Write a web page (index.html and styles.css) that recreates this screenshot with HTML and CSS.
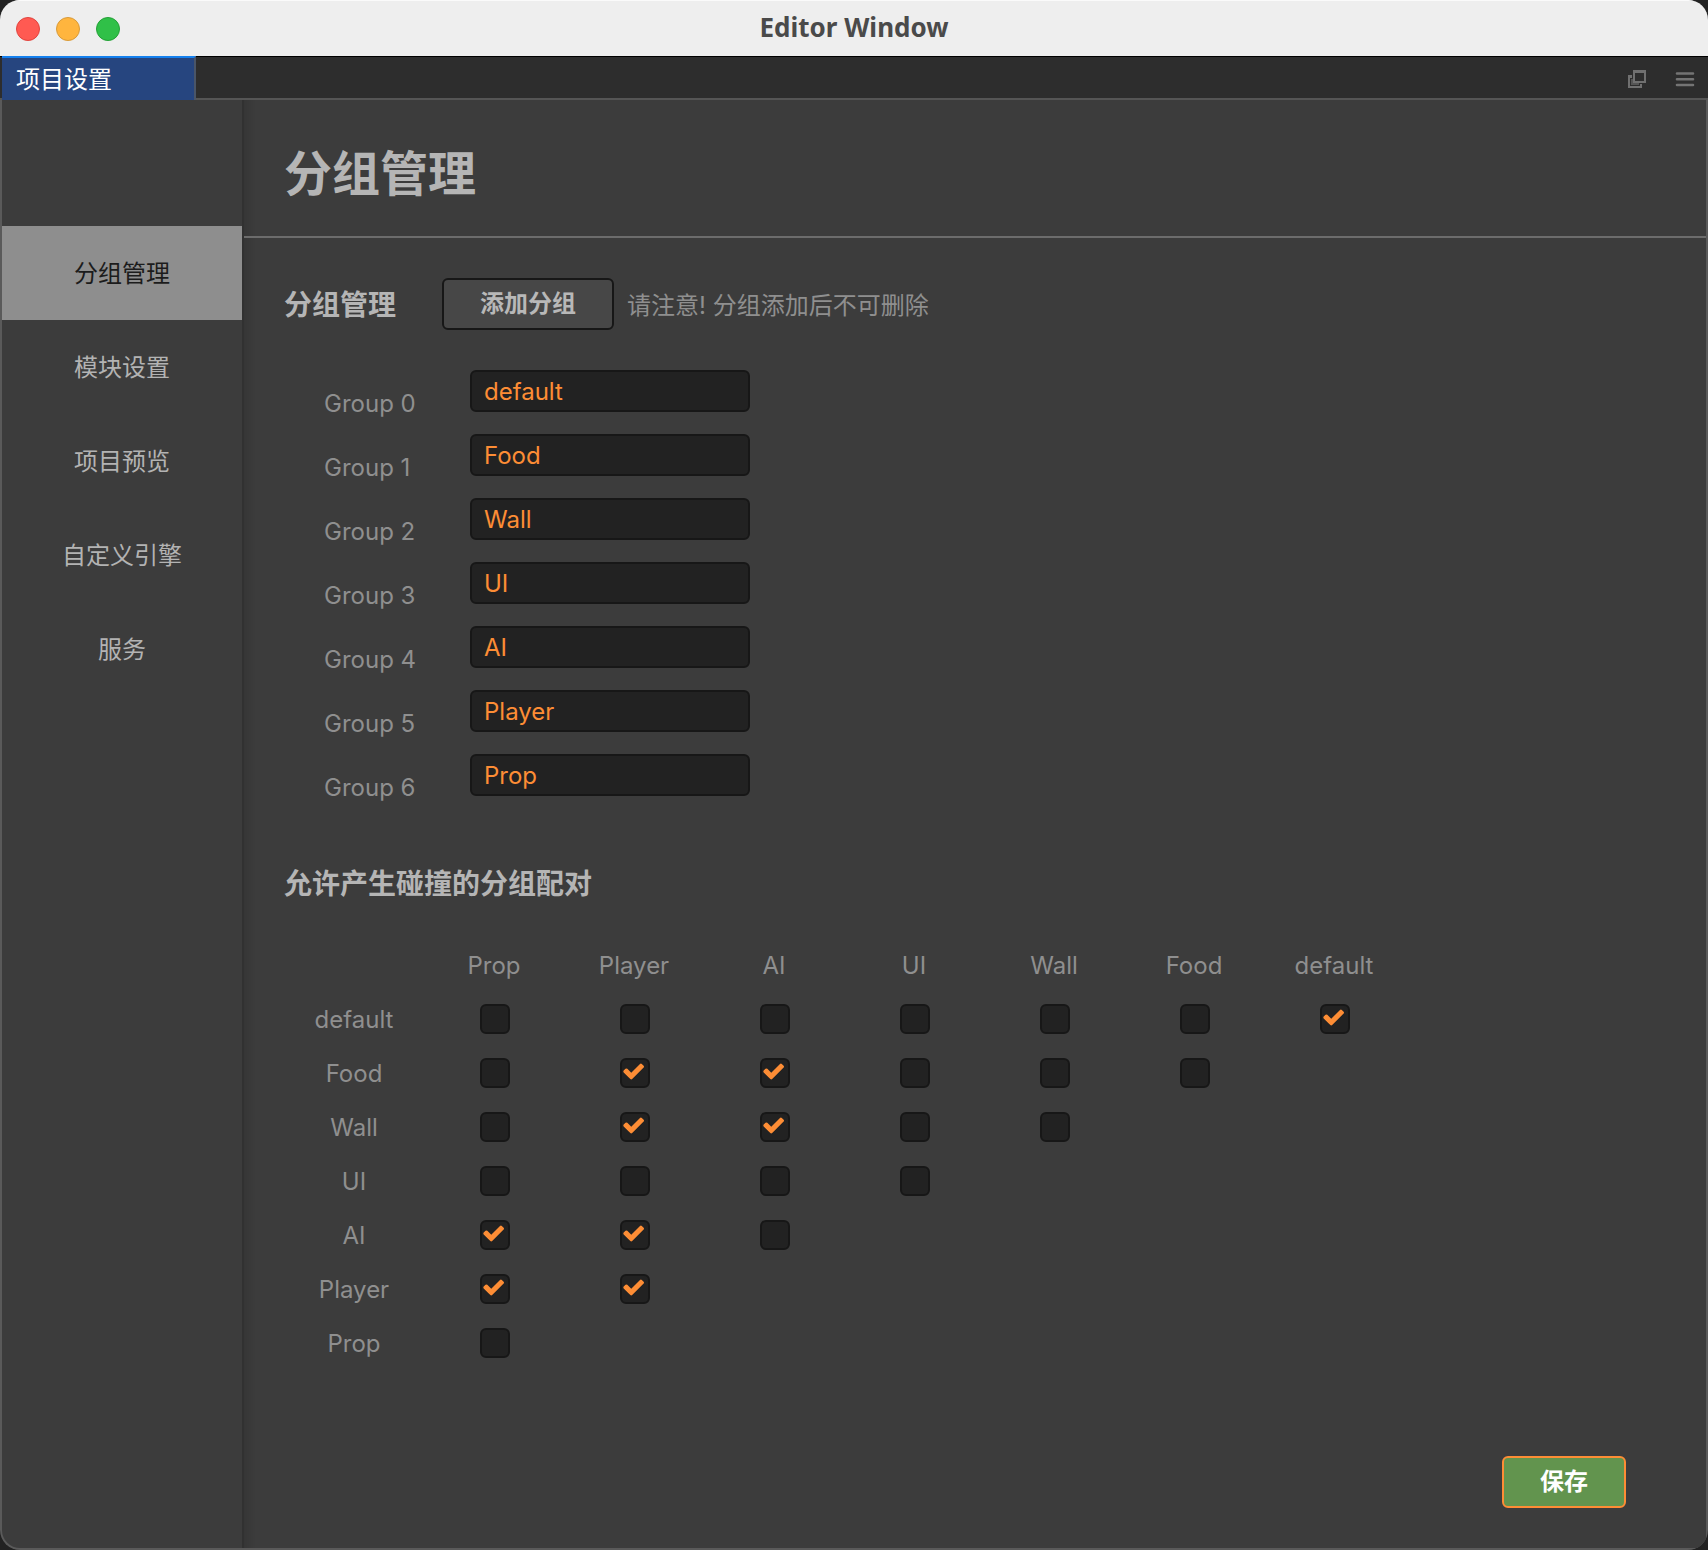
FILE: index.html
```html
<!DOCTYPE html>
<html lang="zh-CN">
<head>
<meta charset="utf-8">
<title>Editor Window</title>
<link rel="stylesheet" href="styles.css">
</head>
<body>
<div class="window">
  <header class="titlebar">
    <div class="lights"><span class="light close"></span><span class="light minimize"></span><span class="light expand"></span></div>
    <span class="window-title">Editor Window</span>
  </header>
  <div class="tabbar">
    <button class="tab" type="button">项目设置</button>
    <div class="tab-tools">
      <button class="tool" type="button" aria-label="弹出面板">
        <svg width="18" height="18" viewBox="0 0 18 18" fill="#707070" fill-rule="evenodd"><path d="M5 0H18V13H5ZM7 3V11H16V3Z"/><path d="M0 5H4V8H2V16H12V14H14V18H0Z"/><path d="M3 9H5V13H11V15H3Z" fill-opacity=".6"/></svg>
      </button>
      <button class="tool" type="button" aria-label="菜单">
        <svg width="20" height="18" viewBox="0 0 20 18" stroke="#747474" stroke-width="2.600" stroke-linecap="round"><path d="M2 3.500H18M2 9.200H18M2 15H18"/></svg>
      </button>
    </div>
  </div>
  <div class="body">
    <nav class="sidebar">
      <a class="nav-item active" href="#group">分组管理</a>
      <a class="nav-item" href="#module">模块设置</a>
      <a class="nav-item" href="#preview">项目预览</a>
      <a class="nav-item" href="#engine">自定义引擎</a>
      <a class="nav-item" href="#service">服务</a>
    </nav>
    <main class="content">
      <div class="page-head"><h1>分组管理</h1></div>
      <section class="section">
        <div class="toolbar">
          <h2>分组管理</h2>
          <button class="btn" type="button">添加分组</button>
          <span class="note">请注意! 分组添加后不可删除</span>
        </div>
        <div class="groups">
          <label for="g0">Group 0</label><input id="g0" type="text" value="default">
          <label for="g1">Group 1</label><input id="g1" type="text" value="Food">
          <label for="g2">Group 2</label><input id="g2" type="text" value="Wall">
          <label for="g3">Group 3</label><input id="g3" type="text" value="UI">
          <label for="g4">Group 4</label><input id="g4" type="text" value="AI">
          <label for="g5">Group 5</label><input id="g5" type="text" value="Player">
          <label for="g6">Group 6</label><input id="g6" type="text" value="Prop">
        </div>
        <h2 class="pairs-title">允许产生碰撞的分组配对</h2>
        <table class="pairs">
          <thead>
            <tr><td></td><th scope="col">Prop</th><th scope="col">Player</th><th scope="col">AI</th><th scope="col">UI</th><th scope="col">Wall</th><th scope="col">Food</th><th scope="col">default</th></tr>
          </thead>
          <tbody>
            <tr><th scope="row">default</th><td><input type="checkbox" aria-label="default Prop"></td><td><input type="checkbox" aria-label="default Player"></td><td><input type="checkbox" aria-label="default AI"></td><td><input type="checkbox" aria-label="default UI"></td><td><input type="checkbox" aria-label="default Wall"></td><td><input type="checkbox" aria-label="default Food"></td><td><input type="checkbox" aria-label="default default" checked></td></tr>
            <tr><th scope="row">Food</th><td><input type="checkbox" aria-label="Food Prop"></td><td><input type="checkbox" aria-label="Food Player" checked></td><td><input type="checkbox" aria-label="Food AI" checked></td><td><input type="checkbox" aria-label="Food UI"></td><td><input type="checkbox" aria-label="Food Wall"></td><td><input type="checkbox" aria-label="Food Food"></td><td></td></tr>
            <tr><th scope="row">Wall</th><td><input type="checkbox" aria-label="Wall Prop"></td><td><input type="checkbox" aria-label="Wall Player" checked></td><td><input type="checkbox" aria-label="Wall AI" checked></td><td><input type="checkbox" aria-label="Wall UI"></td><td><input type="checkbox" aria-label="Wall Wall"></td><td></td><td></td></tr>
            <tr><th scope="row">UI</th><td><input type="checkbox" aria-label="UI Prop"></td><td><input type="checkbox" aria-label="UI Player"></td><td><input type="checkbox" aria-label="UI AI"></td><td><input type="checkbox" aria-label="UI UI"></td><td></td><td></td><td></td></tr>
            <tr><th scope="row">AI</th><td><input type="checkbox" aria-label="AI Prop" checked></td><td><input type="checkbox" aria-label="AI Player" checked></td><td><input type="checkbox" aria-label="AI AI"></td><td></td><td></td><td></td><td></td></tr>
            <tr><th scope="row">Player</th><td><input type="checkbox" aria-label="Player Prop" checked></td><td><input type="checkbox" aria-label="Player Player" checked></td><td></td><td></td><td></td><td></td><td></td></tr>
            <tr><th scope="row">Prop</th><td><input type="checkbox" aria-label="Prop Prop"></td><td></td><td></td><td></td><td></td><td></td><td></td></tr>
          </tbody>
        </table>
      </section>
      <footer class="actions"><button class="btn save" type="button">保存</button></footer>
    </main>
  </div>
</div>
</body>
</html>
```
FILE: styles.css
```css
* { box-sizing: border-box; }

body {
  margin: 0;
  background: #222;
  color: #8f8f8f;
  font: 24px/24px Inter, "Noto Sans CJK SC", sans-serif;
}

button, input { font: inherit; margin: 0; }
h1, h2 { margin: 0; color: #b5b5b5; font-weight: 700; }
h1 { font-size: 48px; line-height: 48px; }
h2 { padding-top: 2px; font-size: 28px; line-height: 28px; }

.window {
  display: flex;
  flex-direction: column;
  min-height: 100vh;
  border-radius: 20px;
  overflow: hidden;
  background: #3c3c3c;
}

.titlebar {
  display: grid;
  grid-template-columns: 1fr auto 1fr;
  align-items: center;
  height: 56px;
  padding: 0 16px;
  background: #eee;
  border-top: 1px solid #fafafa;
}
.lights { display: flex; gap: 16px; }
.light { width: 24px; height: 24px; border-radius: 50%; border: 1px solid; }
.close { background: #ff5a52; border-color: #e0443e; }
.minimize { background: #ffb53e; border-color: #d79a3a; }
.expand { background: #30c048; border-color: #24a036; }
.window-title { padding-bottom: 4px; color: #4a4a4a; font: 700 26px/28px "Noto Sans", sans-serif; }

.tabbar {
  display: flex;
  justify-content: space-between;
  height: 44px;
  padding-left: 2px;
  background: #2d2d2d;
  border-top: 1px solid #000;
  border-bottom: 2px solid #555;
}
.tab {
  width: 194px;
  height: 44px;
  margin-top: -1px;
  padding: 2px 0 0 14px;
  border: 0;
  border-top: 2px solid #1480ee;
  border-right: 2px solid #4a5568;
  background: #26457f;
  color: #fff;
  text-align: left;
}
.tab-tools { display: flex; align-items: center; gap: 29px; padding: 2px 13px 0 0; }
.tool { display: flex; padding: 0; border: 0; background: none; }

.body {
  display: flex;
  flex: 1;
  border: 2px solid #5a5a5a;
  border-top: 0;
  border-radius: 0 0 20px 20px;
}
.sidebar {
  width: 242px;
  flex: none;
  padding-top: 126px;
  border-right: 2px solid #313131;
}
.nav-item {
  display: flex;
  align-items: center;
  justify-content: center;
  height: 94px;
  padding-top: 2px;
  color: #b3b3b3;
  text-decoration: none;
}
.nav-item.active { background: #8e8e8e; color: #1c1c1c; }

.content {
  flex: 1;
  display: flex;
  flex-direction: column;
  background: linear-gradient(to right, #363636, #3c3c3c 12px);
}
.page-head {
  display: flex;
  align-items: center;
  height: 138px;
  padding: 12px 40px 0;
  border-bottom: 2px solid #6c6c6c;
}
.section { padding: 40px 40px 0; }
.toolbar { display: flex; align-items: center; }
.toolbar h2 { width: 158px; }
.btn {
  width: 172px;
  height: 52px;
  padding: 0;
  border: 2px solid #171717;
  border-radius: 6px;
  background: #474747;
  color: #b8b8b8;
  font-weight: 700;
}
.note { margin-left: 13px; padding-top: 4px; }

.groups {
  display: grid;
  grid-template-columns: 146px 280px;
  grid-auto-rows: 64px;
  margin-top: 40px;
  padding-left: 40px;
}
.groups label { margin-top: 22px; }
.groups input {
  width: 280px;
  height: 42px;
  padding: 0 12px;
  border: 2px solid #171717;
  border-radius: 6px;
  background: #222;
  color: #fd8d35;
}

.pairs-title { margin-top: 50px; }
.pairs {
  table-layout: fixed;
  width: 1120px;
  margin-top: 40px;
  border-collapse: collapse;
}
.pairs th, .pairs td { height: 54px; text-align: center; font-weight: 400; }
.pairs th { padding: 2px 0 0; }
.pairs td { padding: 0 0 0 2px; }
.pairs input {
  appearance: none;
  display: block;
  width: 30px;
  height: 30px;
  margin: 0 auto;
  border: 2px solid #171717;
  border-radius: 6px;
  background: #222 border-box;
}
.pairs input:checked {
  background-image: url("data:image/svg+xml,%3Csvg xmlns='http://www.w3.org/2000/svg' width='30' height='30'%3E%3Cpath transform='translate(1.7 1.1) scale(.01335)' fill='%23fd8d35' d='M1671 566q0 40-28 68l-724 724-136 136q-28 28-68 28t-68-28l-136-136-362-362q-28-28-28-68t28-68l136-136q28-28 68-28t68 28l294 295 656-657q28-28 68-28t68 28l136 136q28 28 28 68z'/%3E%3C/svg%3E");
}

.actions {
  display: flex;
  justify-content: flex-end;
  margin-top: auto;
  padding: 40px 80px 40px 40px;
}
.save {
  width: 124px;
  border-color: #fd8d35;
  background: #62944e;
  color: #fff;
}
```
